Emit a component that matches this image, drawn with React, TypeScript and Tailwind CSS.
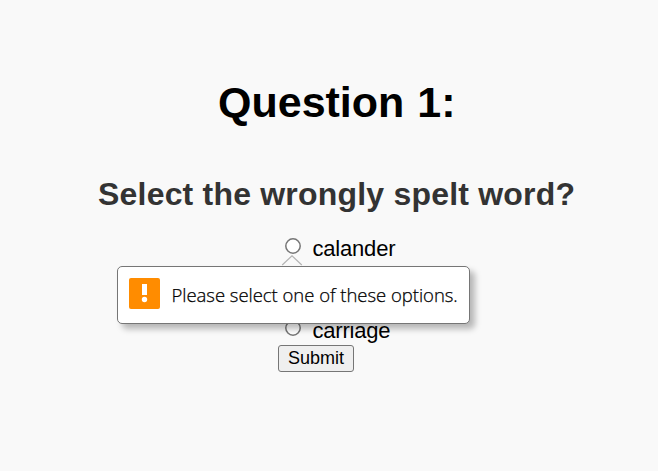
import React from "react";

function Option({ label }: { label: string }) {
  return (
    <label className="flex h-[27.33px] items-center">
      <svg className="mb-[5px] size-4" viewBox="0 0 16 16">
        <circle cx="8" cy="8" r="7.2" fill="#fff" stroke="#767676" strokeWidth="1.5" />
      </svg>
      <span className="ml-[11.5px] text-[22px] leading-[27px] tracking-[-0.2px] text-black">{label}</span>
    </label>
  );
}

function ValidationBubble() {
  return (
    <div className="absolute top-[20px] left-[-168px]">
      <svg className="absolute top-0 left-[164px] h-[12px] w-[22px]" viewBox="0 0 22 12">
        <path d="M1.2 10 L11 0.8 L20.8 10 V12 H1.2 Z" fill="#f9f9f9" />
        <path d="M1.2 10 L11 0.8 L20.8 10" fill="none" stroke="#b4b4b4" strokeWidth="1.2" />
      </svg>
      <div className="relative mt-[11px] flex h-[58px] w-[353px] items-center rounded-[5px] border border-[#767676] bg-white pl-[11px] shadow-[5px_5px_6px_rgba(0,0,0,0.27)]">
        <svg className="mb-[3px] h-[31px] w-[31px] shrink-0" viewBox="0 0 31 31">
          <rect width="31" height="31" rx="2" fill="#ff8c00" />
          <rect x="13" y="6" width="5" height="11" fill="#fff" />
          <circle cx="15.5" cy="21.5" r="2.7" fill="#fff" />
        </svg>
        <span className="ml-[11.5px] whitespace-nowrap font-['Open_Sans','Noto_Sans',sans-serif] text-[18.5px] font-light tracking-[-0.03px] text-black [-webkit-text-stroke:0.25px_black]">
          Please select one of these options.
        </span>
      </div>
    </div>
  );
}

export default function App() {
  return (
    <main className="flex h-[471px] w-[658px] flex-col overflow-hidden bg-[#f9f9f9] font-['Liberation_Sans',Arial,sans-serif]">
      <h1 className="mt-[77px] ml-[218px] h-[50px] whitespace-nowrap text-[43px] leading-[50px] font-bold [word-spacing:1px] text-black">
        Question 1:
      </h1>
      <h2 className="mt-[47px] ml-[98px] h-[40px] whitespace-nowrap text-[32px] leading-[40px] font-bold tracking-[0.2px] text-[#333]">
        Select the wrongly spelt word?
      </h2>
      <form className="relative mt-[21px] ml-[285px] flex w-[200px] flex-col items-start">
        <Option label="calander" />
        <Option label="" />
        <Option label="" />
        <Option label="carriage" />
        <button
          type="button"
          className="mt-[1px] ml-[-7px] h-[27px] w-[76px] rounded-[3px] border border-[#767676] bg-[#efefef] pb-[1px] text-[18px] leading-[24px] text-black"
        >
          Submit
        </button>
        <ValidationBubble />
      </form>
    </main>
  );
}
